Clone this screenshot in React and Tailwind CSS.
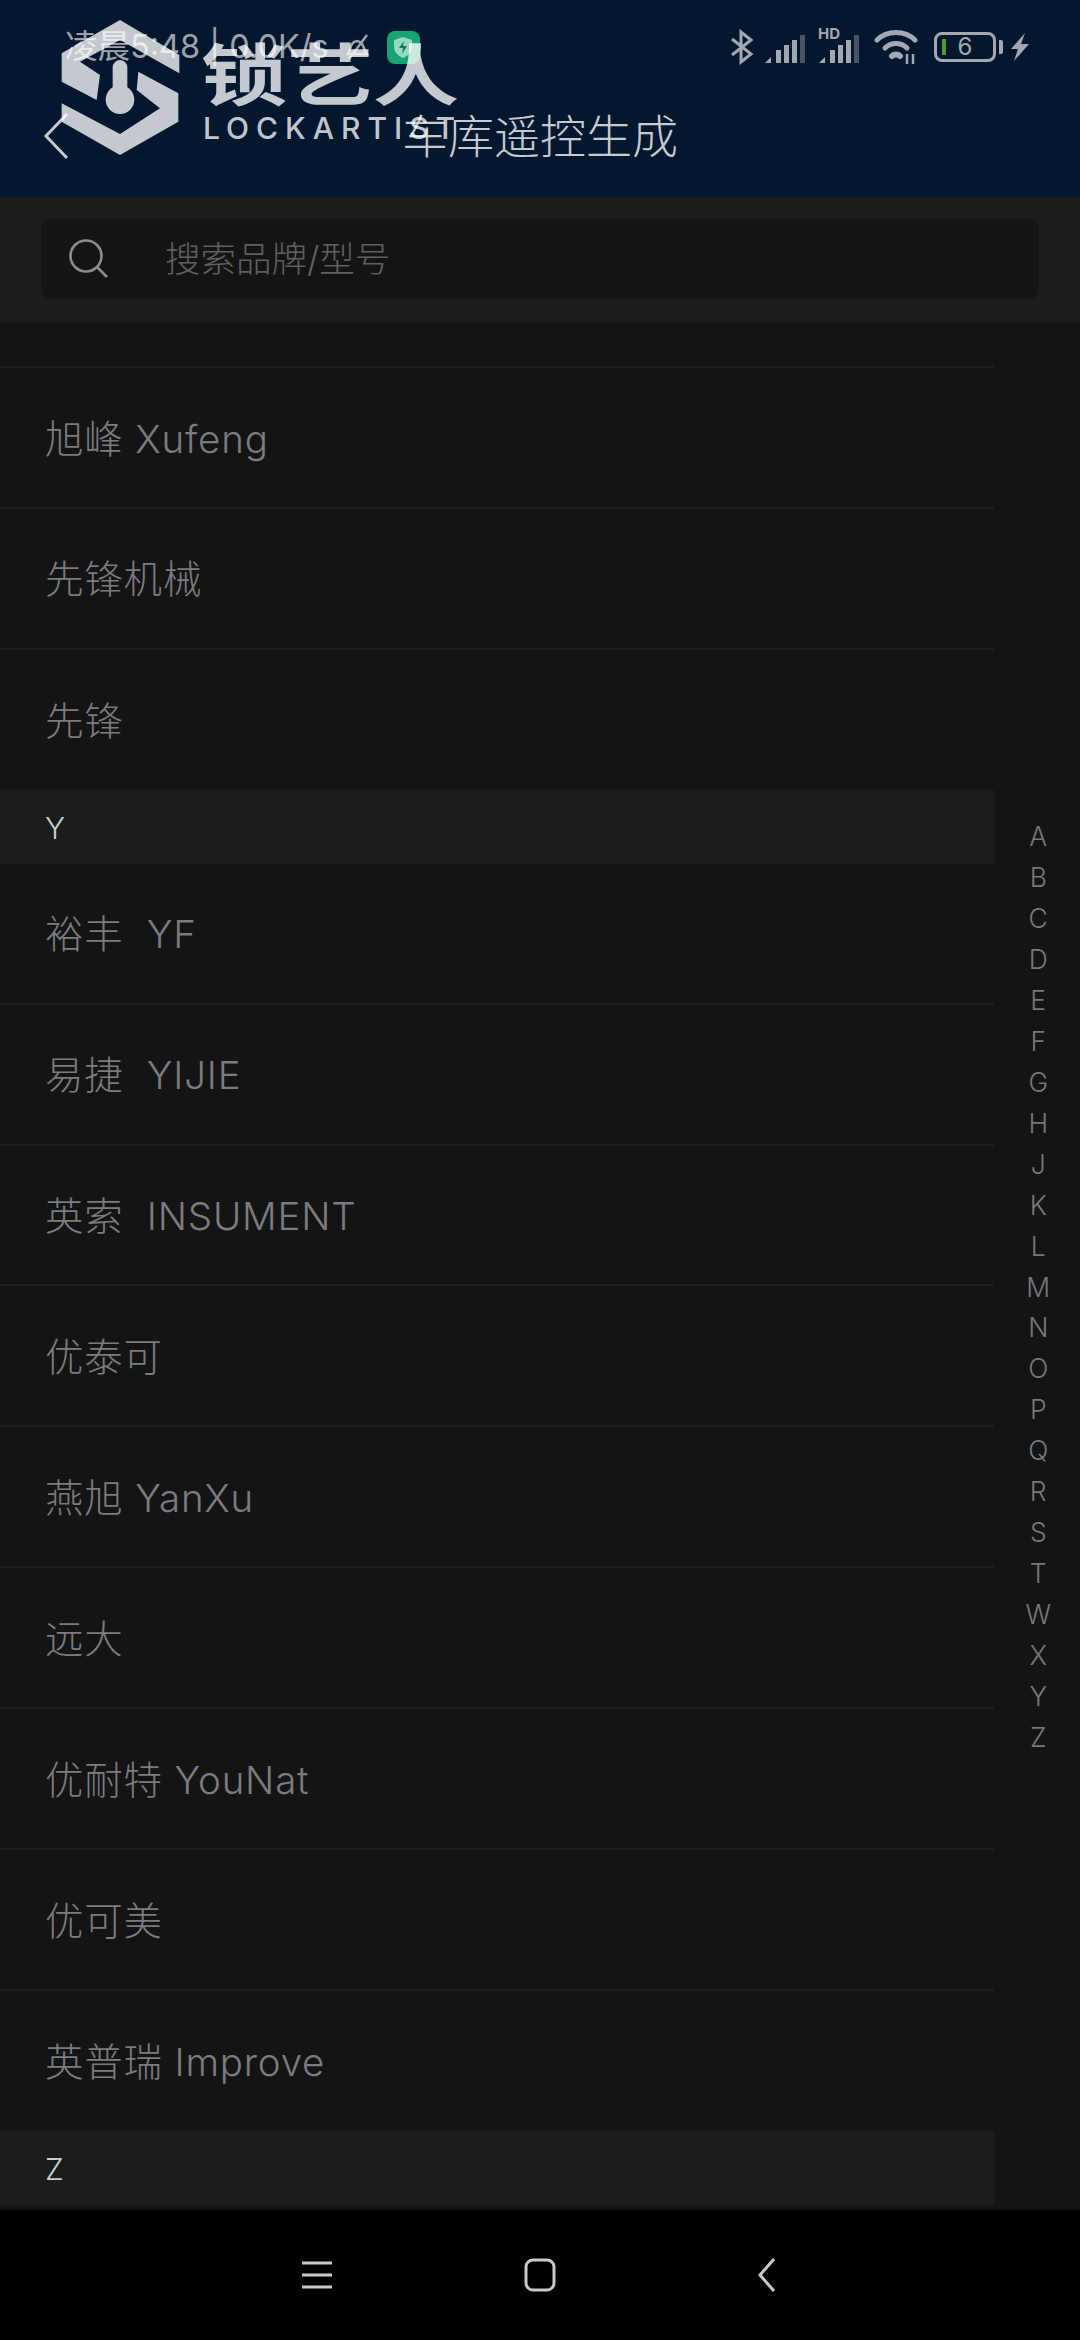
const font = { fontFamily: 'Inter, "Noto Sans CJK SC", sans-serif' };

function Row({ text, last }) {
  return (
    <div className={`flex items-center pl-[45px] pt-[4px] whitespace-pre text-[38.5px] font-light tracking-[0.8px] text-[#7a7c7f] ${last ? 'h-[140px]' : 'h-[140.9px] border-b-2 border-[#1f1f1f]'}`}>
      {text}
    </div>
  );
}

function Section({ letter }) {
  return (
    <div className="flex h-[74px] items-center bg-[#1c1c1c] pl-[45px] pt-[3px] text-[30px] font-light text-[#c9d0d0]">{letter}</div>
  );
}

function Signal({ hd }) {
  return (
    <svg width="42" height="44" viewBox="0 0 42 44" className="block">
      {hd && <text x="0" y="14" fontSize="15" fontWeight="700" fill="#a3a8b0" fontFamily="Inter, sans-serif">HD</text>}
      <path d="M1 38 L7 32 V38 Z" fill="#a3a8b0" />
      <rect x="12" y="25" width="5" height="13" fill="#a3a8b0" />
      <rect x="20" y="20" width="5" height="18" fill="#a3a8b0" />
      <rect x="28" y="15" width="5" height="23" fill="#a3a8b0" />
      <rect x="36" y="10" width="5" height="28" fill="#4a5361" />
    </svg>
  );
}

function StatusBar() {
  return (
    <div className="flex h-[92px] items-center justify-between pl-[65px] pr-[50px] pt-[2px] text-[#9ea3ab]">
      <div className="flex items-center">
        <span className="whitespace-pre text-[32.5px] font-normal">凌晨5:48 | 0.0K/s</span>
        <svg width="28" height="28" viewBox="0 0 28 28" className="ml-[14px]" fill="none" stroke="#9ea3ab" strokeWidth="2.5">
          <path d="M5 21 C8 16 7 9 14 8 C21 9 20 16 24 21 Z" />
          <path d="M6 26 L24 2" />
        </svg>
        <div className="ml-[16px] flex h-[33px] w-[33px] items-center justify-center rounded-[8px] bg-[#17a374]">
          <svg width="20" height="23" viewBox="0 0 20 23">
            <path d="M10 1 L19 4 V11 C19 17 14 20 10 22 C6 20 1 17 1 11 V4 Z" fill="#97d8bf" />
            <path d="M11 5 L6 12 H10 L9 18 L14 10 H10 Z" fill="#147a58" />
          </svg>
        </div>
      </div>
      <div className="flex items-center">
        <svg width="24" height="36" viewBox="0 0 24 36" fill="none" stroke="#a3a8b0" strokeWidth="3" className="mr-[10px]">
          <path d="M2 10 L21 25 L11 33 V3 L21 11 L2 26" />
        </svg>
        <Signal />
        <div className="w-[12px]" />
        <Signal hd />
        <svg width="46" height="36" viewBox="0 0 46 36" className="ml-[14px]" fill="none" stroke="#a3a8b0" strokeWidth="5" strokeLinecap="round">
          <path d="M3 11 C13 1 31 1 41 11" />
          <path d="M11 19 C17 13 27 13 33 19" />
          <path d="M18 27 C20 25 24 25 26 27" strokeWidth="6" />
          <path d="M33 25 V35 M39 35 V25" strokeWidth="2.5" strokeLinecap="butt" />
        </svg>
        <div className="relative ml-[14px] flex h-[30px] w-[62px] items-center justify-center rounded-[8px] border-[3px] border-[#a3a8b0] text-[24px] leading-none text-[#a3a8b0]">
          6
          <div className="absolute left-[5px] top-[4px] h-[16px] w-[4px] bg-[#4f9a2f]" />
          <div className="absolute right-[-10px] top-[5px] h-[14px] w-[4px] rounded-r-[2px] bg-[#a3a8b0]" />
        </div>
        <svg width="20" height="30" viewBox="0 0 20 30" className="ml-[14px]">
          <path d="M15 1 L1 17 H8 L4 29 L19 12 H11 Z" fill="#a3a8b0" />
        </svg>
      </div>
    </div>
  );
}

function Logo() {
  const c = 'rgba(255,255,255,0.77)';
  return (
    <div className="pointer-events-none absolute left-[40px] top-[10px] h-[160px] w-[440px]">
      <svg width="200" height="160" viewBox="0 0 600 480" className="absolute left-0 top-0">
        <path d="M240 30 L418 135 V190 L240 90 L120 155 L180 195 L170 270 L65 215 V130 Z" fill={c} />
        <path d="M295 185 L415 250 V335 L240 435 L65 335 V280 L240 372 L360 295 L290 240 Z" fill={c} />
        <path d="M218 172 A22 22 0 0 1 262 172 V232 A43 43 0 1 1 218 232 Z" fill={c} />
      </svg>
      <div className="absolute left-[161px] top-[11px] origin-center scale-y-[0.78] whitespace-pre text-[86px] font-bold leading-[100px]" style={{ color: c, fontFamily: '"Noto Sans CJK SC", sans-serif' }}>锁艺人</div>
      <div className="absolute left-[163px] top-[98px] whitespace-pre text-[30px] font-medium leading-[40px] tracking-[7px]" style={{ color: c, fontFamily: 'Inter, sans-serif' }}>LOCKARTIST</div>
    </div>
  );
}

const letters = ['A','B','C','D','E','F','G','H','J','K','L','M','N','O','P','Q','R','S','T','W','X','Y','Z'];

export default function App() {
  return (
    <div className="relative flex h-[2340px] w-[1080px] flex-col overflow-hidden bg-[#141414]" style={font}>
      <header className="h-[197px] shrink-0 bg-[#03172f]">
        <StatusBar />
        <div className="relative flex h-[88px] items-center justify-center text-[46px] font-light leading-none text-[#c6cbd2]">
          车库遥控生成
          <svg width="26" height="48" viewBox="0 0 26 48" fill="none" stroke="#c6cbd2" strokeWidth="3" className="absolute left-[43px] top-[20px]">
            <path d="M24 2 L3 24 L24 46" />
          </svg>
        </div>
      </header>

      <div className="h-[125px] shrink-0 bg-[#1c1c1c] pl-[41px] pr-[41px] pt-[22px]">
        <div className="flex h-[80px] items-center rounded-[10px] bg-[#141414] pl-[27px]">
          <svg width="42" height="42" viewBox="0 0 42 42" fill="none" stroke="#8c8c8c" strokeWidth="2.6">
            <circle cx="18" cy="18" r="15.5" />
            <path d="M29 29 L39 39" />
          </svg>
          <span className="ml-[55px] pt-[2px] text-[35.5px] font-light text-[#5f6062]">搜索品牌/型号</span>
        </div>
      </div>

      <main className="flex min-h-0 flex-1">
        <div className="w-[994px] shrink-0">
          <div className="h-[46px] border-b-2 border-[#1f1f1f]" />
          <Row text="旭峰 Xufeng" />
          <Row text="先锋机械" />
          <Row text="先锋" last />
          <Section letter="Y" />
          <Row text="裕丰  YF" />
          <Row text="易捷  YIJIE" />
          <Row text="英索  INSUMENT" />
          <Row text="优泰可" />
          <Row text="燕旭 YanXu" />
          <Row text="远大" />
          <Row text="优耐特 YouNat" />
          <Row text="优可美" />
          <Row text="英普瑞 Improve" last />
          <Section letter="Z" />
        </div>
        <div className="flex-1 pl-[3px] pt-[494px] text-center text-[26.5px] font-light tracking-[0.5px] text-[#77787b]">
          {letters.map((l) => (
            <div key={l} className="flex h-[40.95px] items-center justify-center leading-none">{l}</div>
          ))}
        </div>
      </main>

      <nav className="flex h-[130px] shrink-0 items-center bg-black pl-[302px]">
        <svg width="30" height="30" viewBox="0 0 30 30" stroke="#c9c9c9" strokeWidth="3">
          <path d="M0 3 H30 M0 15 H30 M0 27 H30" />
        </svg>
        <svg width="32" height="34" viewBox="0 0 32 34" fill="none" stroke="#c9c9c9" strokeWidth="3" className="ml-[192px]">
          <rect x="2" y="2" width="28" height="30" rx="7" />
        </svg>
        <svg width="18" height="34" viewBox="0 0 18 34" fill="none" stroke="#c9c9c9" strokeWidth="3" className="ml-[202px]">
          <path d="M16 1 L2 17 L16 33" />
        </svg>
      </nav>

      <Logo />
    </div>
  );
}
